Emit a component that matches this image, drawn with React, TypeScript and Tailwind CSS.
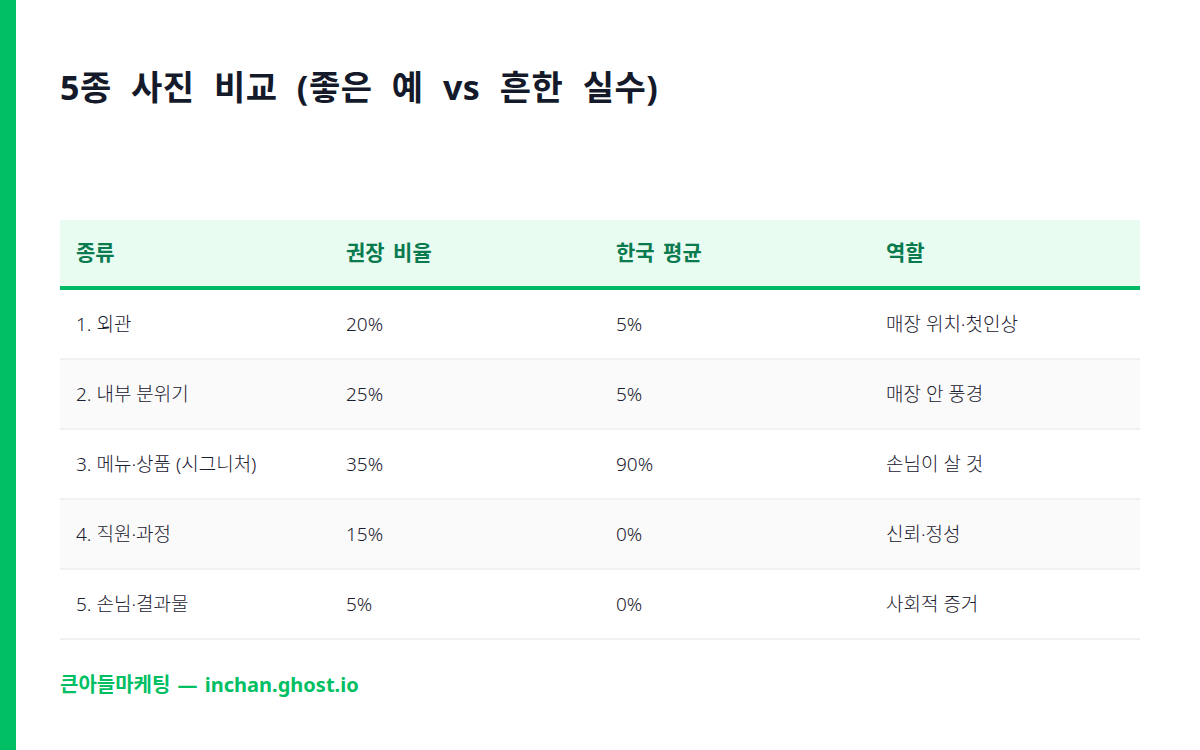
const rows = [
  { kind: '1. 외관', rec: '20%', avg: '5%', role: '매장 위치·첫인상' },
  { kind: '2. 내부 분위기', rec: '25%', avg: '5%', role: '매장 안 풍경' },
  { kind: '3. 메뉴·상품 (시그니처)', rec: '35%', avg: '90%', role: '손님이 살 것' },
  { kind: '4. 직원·과정', rec: '15%', avg: '0%', role: '신뢰·정성' },
  { kind: '5. 손님·결과물', rec: '5%', avg: '0%', role: '사회적 증거' },
]

const headers = ['종류', '권장 비율', '한국 평균', '역할']

export default function App() {
  return (
    <div
      className="flex h-[750px] w-[1200px] bg-white"
      style={{ fontFamily: '"Noto Sans", "Noto Sans CJK KR", sans-serif' }}
    >
      <div className="w-4 shrink-0 bg-[#00bf63]" />
      <div className="flex flex-1 flex-col pl-[44px] pr-[60px] pt-[67px]">
        <h1 className="text-[34px] font-bold leading-[41px] tracking-[0.5px] text-[#141a2a] [word-spacing:10px]">
          5종 사진 비교 (좋은 예 vs 흔한 실수)
        </h1>

        {/* Table */}
        <div className="mt-[112px] w-full">
          <div className="grid h-[70px] grid-cols-4 items-center border-b-4 border-[#00b964] bg-[#e9fcf2]">
            {headers.map((h) => (
              <div
                key={h}
                className="px-4 text-[21px] font-bold text-[#0a7a4f] [word-spacing:3px]"
              >
                {h}
              </div>
            ))}
          </div>
          {rows.map((r, i) => (
            <div
              key={r.kind}
              className={`grid h-[70px] grid-cols-4 items-center border-b-2 border-[#f1f1f1] ${
                i % 2 === 1 ? 'bg-[#fafafa]' : 'bg-white'
              }`}
            >
              {[r.kind, r.rec, r.avg, r.role].map((c, j) => (
                <div key={j} className="px-4 text-[19px] font-light text-[#1b2030]">
                  {c}
                </div>
              ))}
            </div>
          ))}
        </div>

        <div className="mt-[31px] text-[20px] font-bold leading-[28px] text-[#00bf63] [word-spacing:2px]">
          큰아들마케팅 — inchan.ghost.io
        </div>
      </div>
    </div>
  )
}
